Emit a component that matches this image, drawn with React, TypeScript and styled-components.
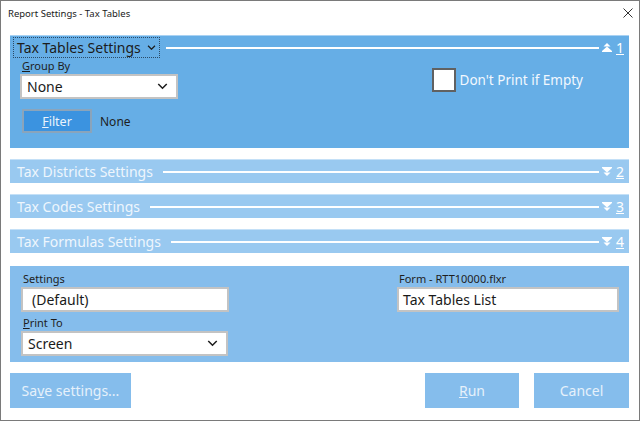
import React from "react";
import styled, { createGlobalStyle } from "styled-components";

const GlobalStyle = createGlobalStyle`
  html, body {
    margin: 0;
    padding: 0;
    background: #ffffff;
  }
  body {
    font-family: "Noto Sans", "Open Sans", sans-serif;
  }
`;

const Window = styled.div`
  box-sizing: border-box;
  width: 640px;
  height: 421px;
  border: 1px solid #7a7a7a;
  background: #ffffff;
  display: flex;
  flex-direction: column;
`;

const TitleBar = styled.div`
  height: 24px;
  display: flex;
  align-items: center;
  justify-content: space-between;
  padding: 0 6px 0 7px;
  font-size: 9.5px;
  color: #1a1a1a;
`;

const Body = styled.div`
  flex: 1;
  display: flex;
  flex-direction: column;
  gap: 11px;
  padding: 10px 10px 0 9px;
`;

const MainPanel = styled.section`
  height: 113px;
  background: #66aee6;
  border-top: 1px solid #a9d2f3;
  box-sizing: border-box;
  display: flex;
  flex-direction: column;
`;

const HeaderRow = styled.div<{ $collapsed?: boolean }>`
  display: flex;
  align-items: center;
  height: ${(p) => (p.$collapsed ? "24px" : "21px")};
  margin-top: ${(p) => (p.$collapsed ? "0" : "1px")};
  padding: 0 5px 0 3px;
  color: ${(p) => (p.$collapsed ? "#eef6fd" : "#1c1c1c")};
  font-size: 14px;
`;

const HeaderTitle = styled.div<{ $focused?: boolean }>`
  display: flex;
  align-items: center;
  gap: 6px;
  height: 100%;
  box-sizing: border-box;
  padding: 0 3px;
  border: 1px dotted ${(p) => (p.$focused ? "#2b4a66" : "transparent")};
  white-space: nowrap;
`;

const HeaderLine = styled.div`
  flex: 1;
  height: 2px;
  background: #ffffff;
  margin: 0 3px 0 6px;
`;

const HeaderNum = styled.span`
  color: #ffffff;
  text-decoration: underline;
  font-size: 14px;
  margin-left: 4px;
`;

const CollapsedPanel = styled.section`
  height: 24px;
  background: #99c9f0;
  border-top: 1px solid #c4e0f7;
  box-sizing: border-box;
  display: flex;
  flex-direction: column;
  justify-content: center;
`;

const PanelBody = styled.div`
  display: flex;
  justify-content: space-between;
  padding: 0 46px 0 10px;
`;

const Column = styled.div`
  display: flex;
  flex-direction: column;
`;

const Label = styled.div<{ $gap?: number }>`
  font-size: 11px;
  color: #1e1e1e;
  height: 16px;
  line-height: 16px;
  padding-left: 2px;
  margin-top: ${(p) => p.$gap ?? 0}px;
`;

const Field = styled.div<{ $width: number; $indent?: number }>`
  box-sizing: border-box;
  width: ${(p) => p.$width}px;
  height: 25px;
  background: #ffffff;
  border: 2px solid #c3c3c3;
  display: flex;
  align-items: center;
  justify-content: space-between;
  padding: 0 8px 0 ${(p) => p.$indent ?? 5}px;
  font-size: 14px;
  color: #1a1a1a;
`;

const FilterRow = styled.div`
  display: flex;
  align-items: center;
  gap: 8px;
  margin-top: 10px;
  margin-left: 2px;
  font-size: 12px;
  color: #1e1e1e;
`;

const FilterButton = styled.div`
  box-sizing: border-box;
  width: 70px;
  height: 24px;
  background: #3b93e0;
  border: 2px solid #8aa4bb;
  color: #eaf3fc;
  font-size: 12.5px;
  display: flex;
  align-items: center;
  justify-content: center;
`;

const CheckRow = styled.div`
  display: flex;
  align-items: center;
  gap: 4px;
  margin-top: 10px;
  color: #f2f8fe;
  font-size: 13.5px;
`;

const CheckBox = styled.div`
  box-sizing: border-box;
  width: 24px;
  height: 24px;
  background: #ffffff;
  border: 2px solid #616161;
`;

const SettingsPanel = styled.section`
  height: 96px;
  margin-top: 2px;
  background: #85bdec;
  box-sizing: border-box;
  display: flex;
  justify-content: space-between;
  padding: 5px 10px 0 11px;
`;

const ButtonBar = styled.div`
  display: flex;
  align-items: center;
  gap: 15px;
`;

const ActionButton = styled.div<{ $width: number }>`
  width: ${(p) => p.$width}px;
  height: 35px;
  background: #85bdec;
  color: #e6f1fb;
  font-size: 14px;
  display: flex;
  align-items: center;
  justify-content: center;
`;

const Spacer = styled.div`
  flex: 1;
`;

const Chevron = ({ size = 11 }: { size?: number }) => (
  <svg width={size} height={size * 0.6} viewBox="0 0 11 7">
    <polyline points="1,1 5.5,5.5 10,1" fill="none" stroke="#1c1c1c" strokeWidth="1.6" />
  </svg>
);

const Arrows = ({ up }: { up?: boolean }) => (
  <svg width="10" height="9" viewBox="0 0 10 9" style={{ transform: up ? "none" : "rotate(180deg)" }}>
    <polygon points="5,0 8.5,3.5 1.5,3.5" fill="#ffffff" />
    <polygon points="5,3.5 10,8 0,8" fill="#ffffff" />
    <rect x="0" y="8" width="10" height="1" fill="#ffffff" />
  </svg>
);

const CloseIcon = () => (
  <svg width="10" height="10" viewBox="0 0 10 10">
    <line x1="0.5" y1="0.5" x2="9.5" y2="9.5" stroke="#333" strokeWidth="1" />
    <line x1="9.5" y1="0.5" x2="0.5" y2="9.5" stroke="#333" strokeWidth="1" />
  </svg>
);

function SectionHeader({
  title,
  num,
  expanded,
}: {
  title: string;
  num: number;
  expanded?: boolean;
}) {
  return (
    <HeaderRow $collapsed={!expanded}>
      <HeaderTitle $focused={expanded}>
        {title}
        {expanded && <Chevron size={9} />}
      </HeaderTitle>
      <HeaderLine />
      <Arrows up={expanded} />
      <HeaderNum>{num}</HeaderNum>
    </HeaderRow>
  );
}

export default function App() {
  return (
    <>
      <GlobalStyle />
      <Window>
        <TitleBar>
          <span>Report Settings - Tax Tables</span>
          <CloseIcon />
        </TitleBar>
        <Body>
          <MainPanel>
            <SectionHeader title="Tax Tables Settings" num={1} expanded />
            <PanelBody>
              <Column>
                <Label>
                  <u>G</u>roup By
                </Label>
                <Field $width={158}>
                  None
                  <Chevron />
                </Field>
                <FilterRow>
                  <FilterButton>
                    <span>
                      <u>F</u>ilter
                    </span>
                  </FilterButton>
                  None
                </FilterRow>
              </Column>
              <Column>
                <CheckRow>
                  <CheckBox />
                  Don't Print if Empty
                </CheckRow>
              </Column>
            </PanelBody>
          </MainPanel>
          <CollapsedPanel>
            <SectionHeader title="Tax Districts Settings" num={2} />
          </CollapsedPanel>
          <CollapsedPanel>
            <SectionHeader title="Tax Codes Settings" num={3} />
          </CollapsedPanel>
          <CollapsedPanel>
            <SectionHeader title="Tax Formulas Settings" num={4} />
          </CollapsedPanel>
          <SettingsPanel>
            <Column>
              <Label>Settings</Label>
              <Field $width={208} $indent={9}>
                (Default)
              </Field>
              <Label $gap={3}>
                <u>P</u>rint To
              </Label>
              <Field $width={207}>
                Screen
                <Chevron />
              </Field>
            </Column>
            <Column>
              <Label>Form - RTT10000.flxr</Label>
              <Field $width={222} $indent={4}>
                Tax Tables List
              </Field>
            </Column>
          </SettingsPanel>
          <ButtonBar>
            <ActionButton $width={121}>
              <span>
                Sa<u>v</u>e settings...
              </span>
            </ActionButton>
            <Spacer />
            <ActionButton $width={94}>
              <span>
                <u>R</u>un
              </span>
            </ActionButton>
            <ActionButton $width={95}>Cancel</ActionButton>
          </ButtonBar>
        </Body>
      </Window>
    </>
  );
}
